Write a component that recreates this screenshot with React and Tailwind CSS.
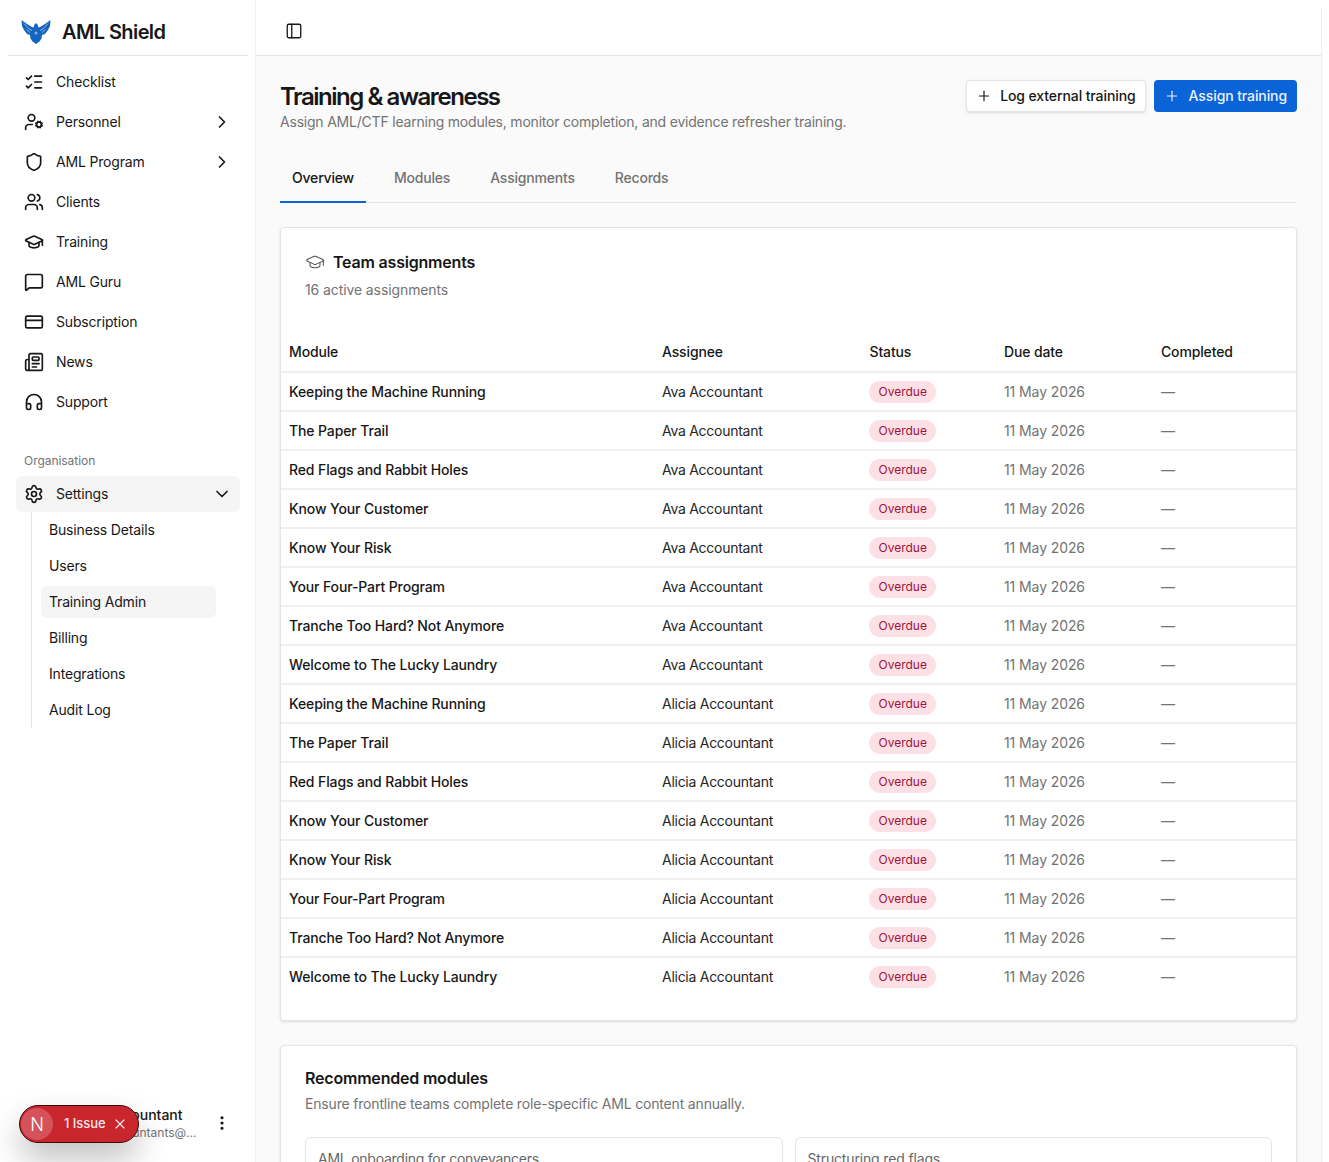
import React from "react";
import {
  ListChecks, UserCog, Shield, Users, GraduationCap, MessageSquare, CreditCard, Newspaper,
  Headphones, Settings, ChevronRight, ChevronDown, PanelLeft, Plus, EllipsisVertical, X,
} from "lucide-react";

const nav = [
  { label: "Checklist", icon: ListChecks },
  { label: "Personnel", icon: UserCog, arrow: true },
  { label: "AML Program", icon: Shield, arrow: true },
  { label: "Clients", icon: Users },
  { label: "Training", icon: GraduationCap },
  { label: "AML Guru", icon: MessageSquare },
  { label: "Subscription", icon: CreditCard },
  { label: "News", icon: Newspaper },
  { label: "Support", icon: Headphones },
];
const sub = ["Business Details", "Users", "Training Admin", "Billing", "Integrations", "Audit Log"];
const modules = [
  "Keeping the Machine Running", "The Paper Trail", "Red Flags and Rabbit Holes", "Know Your Customer",
  "Know Your Risk", "Your Four-Part Program", "Tranche Too Hard? Not Anymore", "Welcome to The Lucky Laundry",
];
const rows = [
  ...modules.map((m) => [m, "Ava Accountant"]),
  ...modules.map((m) => [m, "Alicia Accountant"]),
];

function Logo() {
  return (
    <svg width="30" height="26" viewBox="0 0 30 26" fill="#1565c0" className="shrink-0">
      <path d="M0.5 1 L6 5 L11 8 L12.5 8.5 L13.5 5.5 L15 4 L16.5 5.5 L17.5 8.5 L19 8 L24 5 L29.5 1 L29 7 L27 11 L24 15 L21 16 L20.5 19.5 L18.5 22.5 L15 25 L11.5 22.5 L9.5 19.5 L9 16 L6 15 L3 11 L1 7 Z" />
      <path d="M3 4.5 L8 10 L11 11.5 M5.5 10.5 L9 13.5 M27 4.5 L22 10 L19 11.5 M24.5 10.5 L21 13.5" stroke="#ffffff" strokeWidth="0.5" fill="none" />
      <circle cx="15" cy="14" r="1.5" fill="#7fb2e6" />
    </svg>
  );
}

function Sidebar() {
  return (
    <aside className="w-[256px] shrink-0 h-full bg-white flex flex-col shadow-[inset_-1px_0_0_#f0f0f0]">
      <div className="mx-2 h-[56px] shrink-0 border-b border-[#e5e5e5] flex items-center pl-[13px] pt-2">
        <Logo />
        <span className="ml-[11px] text-[20px] font-semibold text-[#171717] leading-7 tracking-[-0.6px]">AML Shield</span>
      </div>
      <nav className="px-4 pt-[6px] flex flex-col">
        {nav.map(({ label, icon: Icon, arrow }) => (
          <div key={label} className="h-10 flex items-center pl-2 pr-2 text-sm text-[#171717] tracking-[-0.17px]">
            <Icon size={20} strokeWidth={2} className="shrink-0" />
            <span className="ml-3 flex-1">{label}</span>
            {arrow && <ChevronRight size={20} strokeWidth={2} className="shrink-0" />}
          </div>
        ))}
      </nav>
      <div className="px-4 mt-[26px]">
        <div className="pl-2 h-[27px] flex items-start pt-[5px] text-xs text-[#737373] tracking-[-0.05px]">Organisation</div>
        <div className="h-9 mt-[1px] flex items-center pl-2 pr-2 rounded-md bg-[#f5f5f5] text-sm text-[#171717] tracking-[-0.17px]">
          <Settings size={20} strokeWidth={2} className="shrink-0" />
          <span className="ml-3 flex-1">Settings</span>
          <ChevronDown size={20} strokeWidth={2} className="shrink-0" />
        </div>
        <div className="ml-[15px] border-l border-[#e5e5e5] pl-[9px] w-[185px] box-content">
          {sub.map((s) => (
            <div key={s} className="h-9 flex items-center">
              <div className={`w-[175px] h-8 flex items-center px-2 rounded-md text-sm text-[#171717] tracking-[-0.17px] ${s === "Training Admin" ? "bg-[#f5f5f5]" : ""}`}>{s}</div>
            </div>
          ))}
        </div>
      </div>
      <div className="mt-auto flex items-center pl-[24px] pr-[25px] pb-[21px] gap-2">
        <div className="w-8 h-8 rounded-full bg-[#e5e5e5] shrink-0" />
        <div className="min-w-0 flex-1 leading-4 ml-[1px]">
          <div className="text-sm font-medium text-[#171717] truncate">Alicia Accountant</div>
          <div className="text-xs text-[#737373] truncate">alicia.r.accountants@example.com</div>
        </div>
        <EllipsisVertical size={18} strokeWidth={2.25} className="shrink-0 text-[#171717] ml-[5px]" />
      </div>
    </aside>
  );
}

function Overdue() {
  return <span className="inline-flex items-center h-[22px] -ml-[0.5px] px-[9.5px] rounded-full bg-[#fde0e6] text-xs text-[#9f1239]">Overdue</span>;
}

function Table() {
  return (
    <table className="w-full table-fixed border-collapse text-sm">
      <colgroup>
        <col className="w-[373px]" />
        <col className="w-[207.5px]" />
        <col className="w-[134.5px]" />
        <col className="w-[157px]" />
        <col />
      </colgroup>
      <thead>
        <tr className="border-b-2 border-[#f0f0f0]">
          {["Module", "Assignee", "Status", "Due date", "Completed"].map((h) => (
            <th key={h} className="h-[39px] px-2 text-left font-medium text-[#171717] tracking-[-0.15px]">{h}</th>
          ))}
        </tr>
      </thead>
      <tbody>
        {rows.map(([m, a], i) => (
          <tr key={i} className="h-[39px] border-b-2 border-[#f0f0f0] last:border-b-0">
            <td className="px-2 font-medium text-[#171717] tracking-[-0.12px]">{m}</td>
            <td className="px-2 text-[#262626] tracking-[-0.27px]">{a}</td>
            <td className="px-2"><Overdue /></td>
            <td className="px-2 text-[#737373] tracking-[-0.1px]">11 May 2026</td>
            <td className="px-2 text-[#737373]">—</td>
          </tr>
        ))}
      </tbody>
    </table>
  );
}

export default function App() {
  return (
    <div className="relative h-[1162px] w-[1329px] overflow-hidden bg-white flex font-['Inter',sans-serif]">
      <Sidebar />
      <div className="relative w-[1066px] mt-2 h-[1154px] overflow-hidden bg-[#fafafa] border-r border-[#f0f0f0]">
        <header className="h-[48px] bg-white border-b border-[#e5e5e5] flex items-center pl-[29px]">
          <PanelLeft size={18} strokeWidth={1.75} className="text-[#171717] mb-[2px]" />
        </header>
        <main className="px-6 pt-[25px]">
          <div className="flex items-start justify-between">
            <div>
              <h1 className="text-2xl font-semibold text-[#171717] leading-8 tracking-[-1.45px]">Training &amp; awareness</h1>
              <p className="text-sm text-[#737373] leading-5 mt-[-1px] tracking-[-0.21px]">Assign AML/CTF learning modules, monitor completion, and evidence refresher training.</p>
            </div>
            <div className="flex gap-2 -mt-px">
              <button className="h-8 px-[9px] flex items-center gap-2 rounded bg-white border border-[#e5e5e5] shadow-sm text-sm font-medium text-[#171717] tracking-[-0.1px]">
                <Plus size={16} strokeWidth={1.75} />Log external training
              </button>
              <button className="h-8 px-[10px] flex items-center gap-[9px] rounded bg-[#0b63d8] text-sm font-medium text-[#eaf2ff] tracking-[-0.1px]">
                <Plus size={16} strokeWidth={1.75} />Assign training
              </button>
            </div>
          </div>
          <div className="mt-[23px] h-[48px] border-b border-[#e5e5e5] flex gap-4 text-sm tracking-[-0.2px]">
            <div className="h-[48px] px-3 flex items-center font-medium text-[#171717] border-b-2 border-[#0b63d8]">Overview</div>
            <div className="h-[48px] px-3 flex items-center font-medium text-[#737373] border-b-2 border-transparent">Modules</div>
            <div className="h-[48px] px-3 flex items-center font-medium text-[#737373] border-b-2 border-transparent">Assignments</div>
            <div className="h-[48px] px-3 flex items-center font-medium text-[#737373] border-b-2 border-transparent">Records</div>
          </div>
          <section className="mt-6 bg-white border border-[#e5e5e5] rounded shadow-sm">
            <div className="h-[105px] px-6 pt-[24px]">
              <div className="flex items-center gap-2 h-5">
                <GraduationCap size={20} strokeWidth={1.25} className="text-[#525252]" />
                <span className="text-base font-semibold text-[#171717] tracking-[-0.2px]">Team assignments</span>
              </div>
              <p className="text-sm text-[#737373] mt-2 tracking-[-0.1px]">16 active assignments</p>
            </div>
            <Table />
            <div className="h-[24px]" />
          </section>
          <section className="mt-6 bg-white border border-[#e5e5e5] rounded shadow-sm px-6 pt-[22px] pb-6">
            <h2 className="text-base font-semibold text-[#171717] leading-5 tracking-[-0.2px]">Recommended modules</h2>
            <p className="text-sm text-[#737373] mt-[6px] leading-5 tracking-[-0.18px]">Ensure frontline teams complete role-specific AML content annually.</p>
            <div className="grid grid-cols-2 gap-3 mt-[23px]">
              <div className="border border-[#e5e5e5] rounded-md h-[120px] px-3 pt-[11px] text-sm text-[#666666] tracking-[-0.25px]">AML onboarding for conveyancers</div>
              <div className="border border-[#e5e5e5] rounded-md h-[120px] px-3 pt-[11px] text-sm text-[#666666] tracking-[-0.15px]">Structuring red flags</div>
            </div>
          </section>
        </main>
      </div>
      <div className="absolute left-[19px] top-[1105px] w-[120px] h-[38px] rounded-full bg-[#c9252d] border border-[#3a0b0e] shadow-[0_16px_32px_rgba(0,0,0,0.25)] flex items-center">
        <div className="w-[32px] h-[32px] ml-[1px] rounded-full bg-[#d6525a] flex items-center justify-center text-white text-[18px] font-light">N</div>
        <span className="ml-[11px] text-[13px] font-medium text-[#ffe9e9] tracking-[-0.05px] whitespace-nowrap">1 Issue</span>
        <X size={16} strokeWidth={1.75} className="ml-[6px] text-[#ffe9e9]" />
      </div>
    </div>
  );
}
